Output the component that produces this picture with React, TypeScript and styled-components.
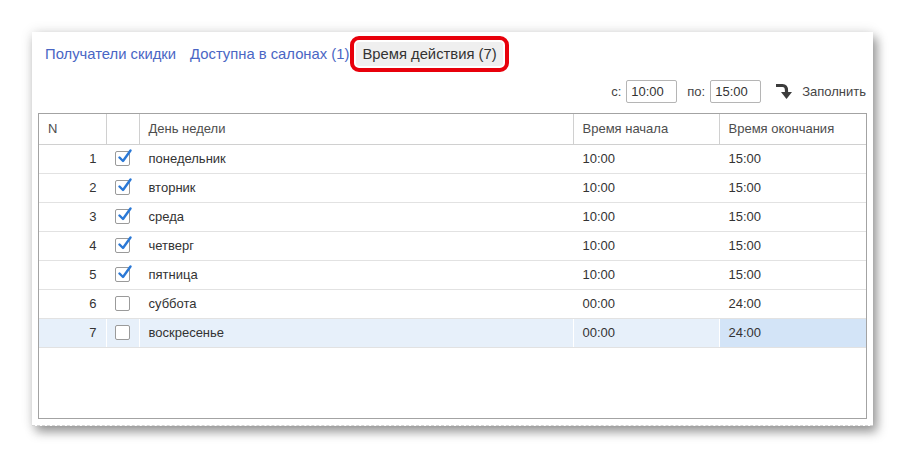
import React, { ReactElement } from "react";
import styled, { createGlobalStyle } from "styled-components";

const GlobalStyle = createGlobalStyle`
  body {
    margin: 0;
    background: #ffffff;
    font-family: Arial, "Liberation Sans", sans-serif;
  }
`;

const Page = styled.div`
  width: 906px;
  height: 458px;
  padding: 32px 0 0 32px;
  box-sizing: border-box;
`;

const Card = styled.div`
  width: 841px;
  height: 394px;
  box-sizing: border-box;
  background: #ffffff;
  padding: 4px 6px 6px 6px;
  border-bottom: 1px dashed #d4d4d4;
  box-shadow: 4px 6px 10px rgba(0, 0, 0, 0.38), 0 0 12px rgba(0, 0, 0, 0.12);
  display: flex;
  flex-direction: column;
`;

const Tabs = styled.div`
  height: 36px;
  display: flex;
  align-items: center;
  padding-left: 7px;
  gap: 14px;
`;

const TabLink = styled.span`
  font-size: 14.8px;
  color: #4a66c4;
  cursor: pointer;
`;

const ActiveFrame = styled.span`
  margin-left: -13px;
  border: 4px solid #e8000b;
  border-radius: 9px;
  padding: 2px;
  display: flex;
`;

const ActiveTab = styled.span`
  height: 24px;
  line-height: 24px;
  padding: 0 6px;
  font-size: 14.8px;
  color: #333333;
  background: #efefef;
  border-radius: 3px;
`;

const FillRow = styled.div`
  margin-top: 7px;
  height: 24px;
  display: flex;
  align-items: center;
  justify-content: flex-end;
  padding-right: 1px;
  font-size: 13px;
  color: #444444;
`;

const FieldLabel = styled.span<{ $gap: number }>`
  margin-left: ${(p) => p.$gap}px;
  margin-right: 5px;
`;

const TimeInput = styled.div`
  width: 51px;
  height: 23px;
  box-sizing: border-box;
  border: 1px solid #b5b5b5;
  border-radius: 2px;
  padding: 0 4px;
  line-height: 21px;
  font-size: 13px;
  color: #333333;
`;

const FillButton = styled.span`
  margin-left: 14px;
  display: flex;
  align-items: center;
  gap: 9px;
  cursor: pointer;
`;

const Table = styled.table`
  margin-top: 10px;
  flex: 1;
  border: 1px solid #a3a3a3;
  border-collapse: collapse;
  table-layout: fixed;
  width: 829px;
  font-size: 13px;
  color: #333333;
  display: block;
  box-sizing: border-box;
`;

const HeadCell = styled.th<{ $w: number }>`
  width: ${(p) => p.$w}px;
  height: 30px;
  box-sizing: border-box;
  padding: 0 9px;
  text-align: left;
  font-weight: normal;
  color: #4d4d4d;
  border-right: 1px solid #d0d0d0;
  border-bottom: 1px solid #d0d0d0;
  &:last-child {
    border-right: none;
  }
`;

const Row = styled.tr<{ $selected?: boolean }>`
  background: ${(p) => (p.$selected ? "#e7f0fa" : "#ffffff")};
`;

const Cell = styled.td<{ $align?: string; $current?: boolean; $selected?: boolean; $flush?: boolean }>`
  height: 28px;
  padding: ${(p) => (p.$flush ? "0" : "0 9px")};
  text-align: ${(p) => p.$align || "left"};
  border-bottom: 1px solid #e2e2e2;
  border-right: 1px solid ${(p) => (p.$selected ? "#ffffff" : "transparent")};
  background: ${(p) => (p.$current ? "#d3e4f7" : "transparent")};
  &:last-child {
    border-right: none;
  }
`;

const Box = styled.span`
  display: block;
  margin: 0 auto;
  width: 15px;
  height: 15px;
  box-sizing: border-box;
  border: 1px solid #9a9a9a;
  border-radius: 2px;
  background: #ffffff;
  position: relative;
`;

const Check = styled.svg`
  position: absolute;
  left: 1px;
  top: -4px;
`;

const days = [
  { n: 1, on: true, day: "понедельник", from: "10:00", to: "15:00" },
  { n: 2, on: true, day: "вторник", from: "10:00", to: "15:00" },
  { n: 3, on: true, day: "среда", from: "10:00", to: "15:00" },
  { n: 4, on: true, day: "четверг", from: "10:00", to: "15:00" },
  { n: 5, on: true, day: "пятница", from: "10:00", to: "15:00" },
  { n: 6, on: false, day: "суббота", from: "00:00", to: "24:00" },
  { n: 7, on: false, day: "воскресенье", from: "00:00", to: "24:00" },
];

const CheckBox = ({ on }: { on: boolean }): ReactElement => (
  <Box>
    {on && (
      <Check width="15" height="17" viewBox="0 0 15 17">
        <path
          d="M2.5 9.5 L6 13 L13.5 2.5"
          fill="none"
          stroke="#2a78d6"
          strokeWidth="2.4"
          strokeLinecap="round"
          strokeLinejoin="round"
        />
      </Check>
    )}
  </Box>
);

const FillIcon = (): ReactElement => (
  <svg width="18" height="18" viewBox="0 0 18 18">
    <path
      d="M1 3.5 H7.5 C10.5 3.5 11.5 5.5 11.5 8.5 V10.5"
      fill="none"
      stroke="#3c3c3c"
      strokeWidth="3.2"
    />
    <path d="M6 10 H17 L11.5 17 Z" fill="#3c3c3c" />
  </svg>
);

const App = (): ReactElement => {
  return (
    <>
      <GlobalStyle />
      <Page>
        <Card>
          <Tabs>
            <TabLink>Получатели скидки</TabLink>
            <TabLink>Доступна в салонах (1)</TabLink>
            <ActiveFrame>
              <ActiveTab>Время действия (7)</ActiveTab>
            </ActiveFrame>
          </Tabs>
          <FillRow>
            <FieldLabel $gap={0}>с:</FieldLabel>
            <TimeInput>10:00</TimeInput>
            <FieldLabel $gap={10}>по:</FieldLabel>
            <TimeInput>15:00</TimeInput>
            <FillButton>
              <FillIcon />
              Заполнить
            </FillButton>
          </FillRow>
          <Table>
            <thead>
              <tr>
                <HeadCell $w={67}>N</HeadCell>
                <HeadCell $w={33}></HeadCell>
                <HeadCell $w={434}>День недели</HeadCell>
                <HeadCell $w={146}>Время начала</HeadCell>
                <HeadCell $w={147}>Время окончания</HeadCell>
              </tr>
            </thead>
            <tbody>
              {days.map((d) => {
                const selected = d.n === 7;
                return (
                  <Row key={d.n} $selected={selected}>
                    <Cell $align="right" $selected={selected}>
                      {d.n}
                    </Cell>
                    <Cell $selected={selected} $flush>
                      <CheckBox on={d.on} />
                    </Cell>
                    <Cell $selected={selected}>{d.day}</Cell>
                    <Cell $selected={selected}>{d.from}</Cell>
                    <Cell $selected={selected} $current={selected}>
                      {d.to}
                    </Cell>
                  </Row>
                );
              })}
            </tbody>
          </Table>
        </Card>
      </Page>
    </>
  );
};

export default App;
